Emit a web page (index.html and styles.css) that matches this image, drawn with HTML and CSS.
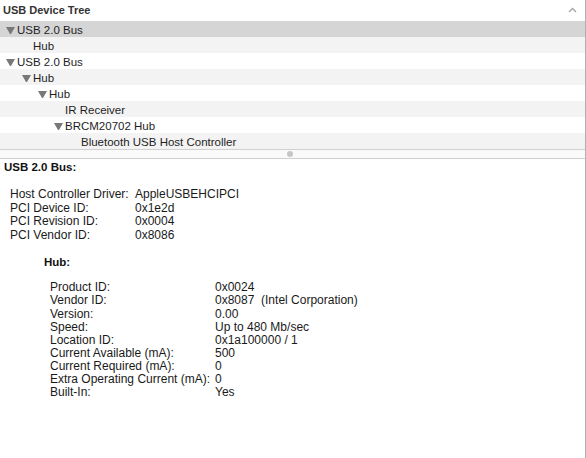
FILE: index.html
```html
<!DOCTYPE html>
<html lang="en">
<head>
    <meta charset="UTF-8">
    <title>System Information - USB</title>
    <link rel="stylesheet" href="styles.css">
</head>
<body>
    <div class="window">
        <div class="tree-pane">
            <div class="tree-header">
                <span>USB Device Tree</span>
                <svg class="sort-caret" width="9" height="6" viewBox="0 0 9 6">
                    <path d="M1 5 L4.5 1.5 L8 5" fill="none" stroke="#a6a6a6" stroke-width="1.4"/>
                </svg>
            </div>
            <ul class="tree">
                <li class="row selected lvl-0"><span class="toggle open"></span>USB 2.0 Bus</li>
                <li class="row lvl-1"><span class="toggle"></span>Hub</li>
                <li class="row lvl-0"><span class="toggle open"></span>USB 2.0 Bus</li>
                <li class="row lvl-1"><span class="toggle open"></span>Hub</li>
                <li class="row lvl-2"><span class="toggle open"></span>Hub</li>
                <li class="row lvl-3"><span class="toggle"></span>IR Receiver</li>
                <li class="row lvl-3"><span class="toggle open"></span>BRCM20702 Hub</li>
                <li class="row lvl-4"><span class="toggle"></span>Bluetooth USB Host Controller</li>
            </ul>
        </div>

        <div class="splitter"><span class="grip"></span></div>

        <div class="details">
            <div class="section-title">USB 2.0 Bus:</div>
            <div class="props bus-props">
                <span>Host Controller Driver:</span><span>AppleUSBEHCIPCI</span>
                <span>PCI Device ID:</span><span>0x1e2d</span>
                <span>PCI Revision ID:</span><span>0x0004</span>
                <span>PCI Vendor ID:</span><span>0x8086</span>
            </div>

            <div class="section-title sub">Hub:</div>
            <div class="props hub-props">
                <span>Product ID:</span><span>0x0024</span>
                <span>Vendor ID:</span><span>0x8087  (Intel Corporation)</span>
                <span>Version:</span><span>0.00</span>
                <span>Speed:</span><span>Up to 480 Mb/sec</span>
                <span>Location ID:</span><span>0x1a100000 / 1</span>
                <span>Current Available (mA):</span><span>500</span>
                <span>Current Required (mA):</span><span>0</span>
                <span>Extra Operating Current (mA):</span><span>0</span>
                <span>Built-In:</span><span>Yes</span>
            </div>
        </div>
    </div>
</body>
</html>
```

FILE: styles.css
```css
* {
    margin: 0;
    padding: 0;
    box-sizing: border-box;
}

body {
    width: 586px;
    height: 458px;
    background: #ffffff;
    color: #222222;
    font-family: "Liberation Sans", Arial, sans-serif;
    overflow: hidden;
}

.window {
    height: 100%;
    display: flex;
    flex-direction: column;
    border-right: 1px solid #b0b0b0;
}

/* top half: outline view */

.tree-header {
    height: 21px;
    display: flex;
    justify-content: space-between;
    align-items: center;
    padding: 0 8px 0 3px;
    font-size: 11px;
    font-weight: bold;
    line-height: 21px;
    color: #333333;
}

.sort-caret {
    margin-bottom: 1px;
}

.tree {
    list-style: none;
}

.row {
    display: flex;
    height: 16px;
    padding-top: 2px;
    font-size: 11.5px;
    line-height: 14px;
    color: #1e1e1e;
    white-space: nowrap;
}

.row:nth-child(even) {
    background: #f3f3f3;
}

.row.selected {
    background: #d5d5d5;
}

.lvl-0 { padding-left: 6px; }
.lvl-1 { padding-left: 22px; }
.lvl-2 { padding-left: 38px; }
.lvl-3 { padding-left: 54px; }
.lvl-4 { padding-left: 70px; }

.toggle {
    width: 9px;
    height: 7px;
    margin: 4px 2px 0 0;
    flex-shrink: 0;
}

.toggle.open {
    border-left: 4.5px solid transparent;
    border-right: 4.5px solid transparent;
    border-top: 7px solid #787878;
}

/* divider between the panes */

.splitter {
    height: 10px;
    display: flex;
    justify-content: center;
    align-items: center;
    padding-right: 5px;
    background: #fafafa;
    border-top: 1px solid #d0d0d0;
    border-bottom: 1px solid #d0d0d0;
}

.grip {
    width: 6px;
    height: 6px;
    border-radius: 50%;
    background: #c6c6c6;
}

/* bottom half: properties */

.details {
    flex: 1;
    padding: 2px 0 0 4px;
    font-size: 12px;
    color: #1a1a1a;
}

.section-title {
    font-size: 11.5px;
    font-weight: bold;
    line-height: 13px;
    color: #111111;
}

.section-title.sub {
    margin: 14px 0 0 40px;
}

.props {
    display: grid;
    white-space: pre;
}

.bus-props {
    grid-template-columns: 125px auto;
    margin: 14px 0 0 6px;
    line-height: 13.6px;
}

.hub-props {
    grid-template-columns: 165px auto;
    margin: 12px 0 0 46px;
    line-height: 13.1px;
}
```
